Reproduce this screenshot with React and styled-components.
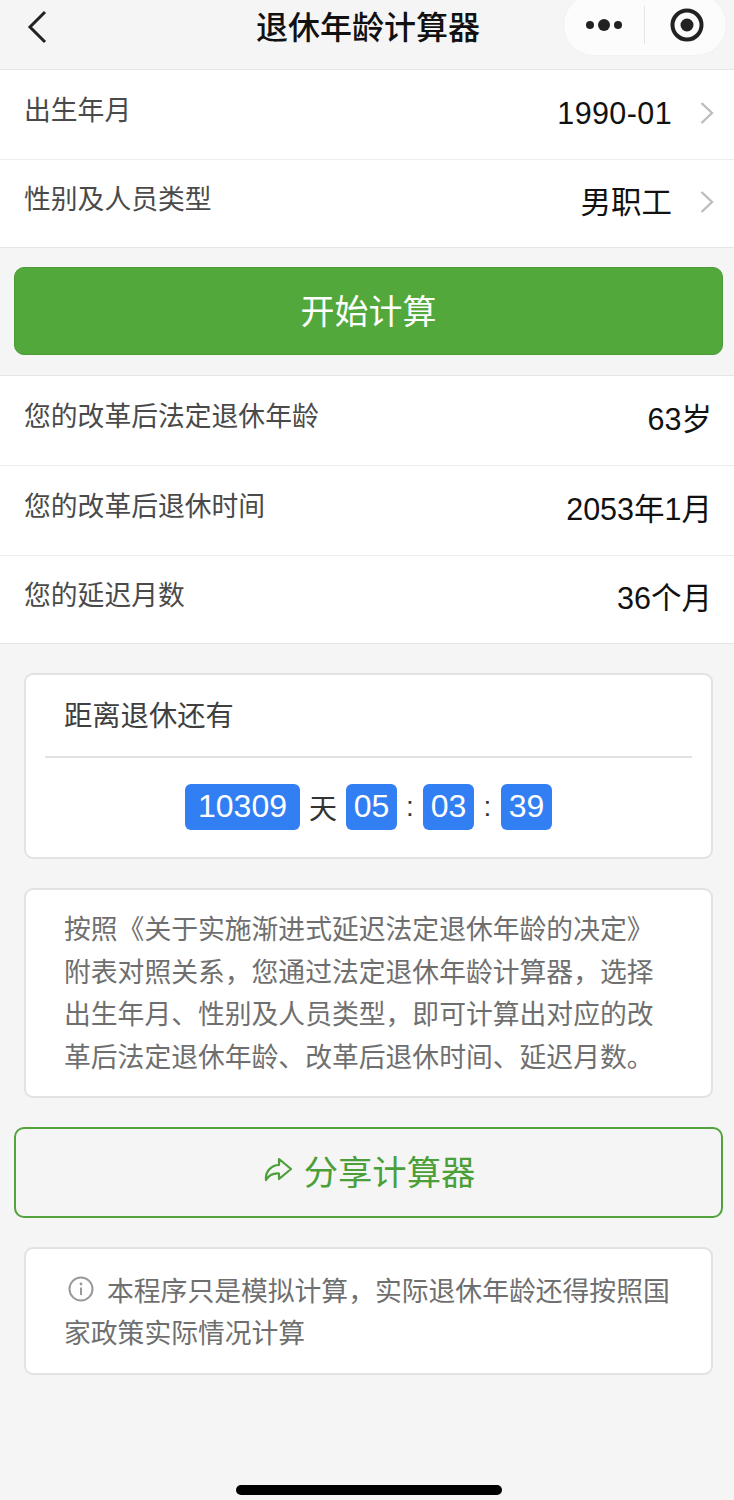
import React from 'react';
import styled, { createGlobalStyle } from 'styled-components';

const GlobalStyle = createGlobalStyle`
  html, body {
    margin: 0;
    padding: 0;
    background: #f5f5f5;
    font-family: "Liberation Sans", "Noto Sans CJK SC", sans-serif;
  }
  * { box-sizing: border-box; }
`;

const Page = styled.div`
  position: relative;
  width: 734px;
  height: 1500px;
  overflow: hidden;
  background: #f5f5f5;
`;

const NavBar = styled.header`
  height: 70px;
  display: flex;
  align-items: center;
  justify-content: center;
  padding: 0 0 14px 2px;
  border-bottom: 1px solid #e6e6e6;
`;

const NavTitle = styled.h1`
  margin: 0;
  font-size: 32px;
  font-weight: 500;
  line-height: 40px;
  color: #111;
`;

const BackButton = styled.svg`
  position: absolute;
  left: 26px;
  top: 9px;
`;

const Capsule = styled.div`
  position: absolute;
  left: 563px;
  top: -6px;
  width: 164px;
  height: 62px;
  display: flex;
  align-items: center;
  background: #fcfcfc;
  border-radius: 31px;
  border: 1px solid #f2f2f2;
`;

const CapsuleDivider = styled.span`
  width: 1px;
  height: 38px;
  background: #e4e4e4;
`;

const CapsuleSlot = styled.span`
  width: 82px;
  display: flex;
  justify-content: center;
  padding-left: ${p => p.$inset || 0}px;
`;

const Group = styled.section`
  background: #fff;
  border-bottom: 1px solid #e6e6e6;
  border-top: ${p => (p.$top ? '1px solid #e6e6e6' : '0')};
`;

const Row = styled.div`
  height: ${p => p.$height || 89}px;
  display: flex;
  align-items: center;
  justify-content: space-between;
  padding: 0 22px 0 24px;
  border-top: ${p => (p.$first ? '0' : '1px solid #ededed')};
`;

const Label = styled.span`
  font-size: 26.8px;
  color: #4a4a4a;
  margin-top: -13px;
`;

const Value = styled.span`
  display: flex;
  align-items: center;
  height: 40px;
  line-height: 40px;
  margin-top: -3px;
  font-size: 30.5px;
  letter-spacing: ${p => (p.$date ? '0.4px' : '0')};
  color: #111;
`;

const Chevron = styled.svg`
  margin-left: 28px;
  margin-right: -2px;
`;

const PrimaryButton = styled.button`
  display: block;
  width: 709px;
  height: 88px;
  margin: 19px 0 20px 14px;
  border: 1px solid #4b9c36;
  border-radius: 10px;
  background: #52a83b;
  color: #fff;
  font-family: inherit;
  font-size: 34px;
  padding: 0 0 4px;
`;

const Card = styled.div`
  width: 689px;
  margin-left: 24px;
  margin-top: ${p => p.$gap || 0}px;
  background: #fff;
  border: 2px solid #e2e2e2;
  border-radius: 9px;
`;

const CardTitle = styled.div`
  margin: 0 19px;
  height: 83px;
  padding: 0 0 5px 19px;
  display: flex;
  align-items: center;
  border-bottom: 2px solid #e2e2e2;
  font-size: 28.3px;
  color: #3f3f3f;
`;

const Countdown = styled.div`
  height: 99px;
  padding-bottom: 2px;
  display: flex;
  align-items: center;
  justify-content: center;
  font-size: 28px;
  color: #333;
`;

const TimeBox = styled.span`
  height: 46px;
  width: ${p => (p.$wide ? 115 : 51)}px;
  display: flex;
  align-items: center;
  justify-content: center;
  background: #327ff3;
  border-radius: 6px;
  color: #fff;
  font-size: 32px;
`;

const Unit = styled.span`
  width: ${p => p.$width}px;
  text-align: center;
`;

const NoteText = styled.p`
  margin: 0;
  padding: ${p => p.$padding};
  font-size: 26.8px;
  line-height: ${p => p.$leading}px;
  color: #6f6f6f;
`;

const InfoIcon = styled.svg`
  vertical-align: -1px;
  margin: 0 13px 0 4px;
`;

const ShareButton = styled.button`
  width: 709px;
  height: 91px;
  margin: 29px 0 29px 14px;
  padding: 0 0 6px 2px;
  display: flex;
  align-items: center;
  justify-content: center;
  gap: 12px;
  border: 2px solid #52a33c;
  border-radius: 10px;
  background: #f5f5f5;
  color: #4b9f38;
  font-family: inherit;
  font-size: 34.3px;
`;

const HomeBar = styled.div`
  position: absolute;
  left: 236px;
  top: 1485px;
  width: 266px;
  height: 10px;
  border-radius: 5px;
  background: #000;
`;

const RowArrow = () => (
  <Chevron width="14" height="24" viewBox="0 0 14 24" fill="none">
    <path d="M1.5 2 L12 12 L1.5 22" stroke="#bdbdbd" strokeWidth="2.4" />
  </Chevron>
);

export default function App() {
  return (
    <Page>
      <GlobalStyle />
      <NavBar>
        <BackButton width="22" height="36" viewBox="0 0 22 36" fill="none">
          <path d="M19 3 L4 18 L19 33" stroke="#222" strokeWidth="3" />
        </BackButton>
        <NavTitle>退休年龄计算器</NavTitle>
        <Capsule>
          <CapsuleSlot>
            <svg width="38" height="16" viewBox="0 0 38 16" fill="#222">
              <circle cx="5" cy="8" r="4" />
              <circle cx="19" cy="8" r="6" />
              <circle cx="33" cy="8" r="4" />
            </svg>
          </CapsuleSlot>
          <CapsuleDivider />
          <CapsuleSlot $inset={2}>
            <svg width="36" height="36" viewBox="0 0 36 36" fill="none">
              <circle cx="18" cy="18" r="14.5" stroke="#222" strokeWidth="4" />
              <circle cx="18" cy="18" r="6.5" fill="#222" />
            </svg>
          </CapsuleSlot>
        </Capsule>
      </NavBar>

      <Group>
        <Row $first>
          <Label>出生年月</Label>
          <Value $date>
            1990-01
            <RowArrow />
          </Value>
        </Row>
        <Row $height={88}>
          <Label>性别及人员类型</Label>
          <Value>
            男职工
            <RowArrow />
          </Value>
        </Row>
      </Group>

      <PrimaryButton>开始计算</PrimaryButton>

      <Group $top>
        <Row $first>
          <Label>您的改革后法定退休年龄</Label>
          <Value>63岁</Value>
        </Row>
        <Row $height={90}>
          <Label>您的改革后退休时间</Label>
          <Value>2053年1月</Value>
        </Row>
        <Row $height={88}>
          <Label>您的延迟月数</Label>
          <Value>36个月</Value>
        </Row>
      </Group>

      <Card $gap={29}>
        <CardTitle>距离退休还有</CardTitle>
        <Countdown>
          <TimeBox $wide>10309</TimeBox>
          <Unit $width={46}>天</Unit>
          <TimeBox>05</TimeBox>
          <Unit $width={26}>:</Unit>
          <TimeBox>03</TimeBox>
          <Unit $width={27}>:</Unit>
          <TimeBox>39</TimeBox>
        </Countdown>
      </Card>

      <Card $gap={29}>
        <NoteText $padding="19px 46px 17px 38px" $leading={42.5}>
          按照《关于实施渐进式延迟法定退休年龄的决定》附表对照关系，您通过法定退休年龄计算器，选择出生年月、性别及人员类型，即可计算出对应的改革后法定退休年龄、改革后退休时间、延迟月数。
        </NoteText>
      </Card>

      <ShareButton>
        <svg width="28" height="26" viewBox="0 0 28 26" fill="none">
          <path
            d="M2 23 C1 14 8 8 15 8 V2 L27 12 L15 22 V16.5 C9 16 5 18 2 23 Z"
            stroke="#4b9f38"
            strokeWidth="2.2"
            strokeLinejoin="round"
          />
        </svg>
        分享计算器
      </ShareButton>

      <Card>
        <NoteText $padding="22px 28px 18px 38px" $leading={42}>
          <InfoIcon width="26" height="26" viewBox="0 0 26 26" fill="none">
            <circle cx="13" cy="13" r="11.5" stroke="#999" strokeWidth="2" />
            <circle cx="13" cy="8" r="1.4" fill="#999" />
            <path d="M13 11.5 V19" stroke="#999" strokeWidth="2" />
          </InfoIcon>
          本程序只是模拟计算，实际退休年龄还得按照国家政策实际情况计算
        </NoteText>
      </Card>

      <HomeBar />
    </Page>
  );
}
